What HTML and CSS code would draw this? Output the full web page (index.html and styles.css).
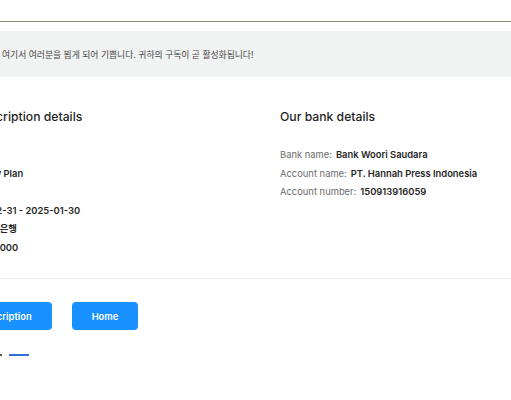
FILE: index.html
```html
<!DOCTYPE html>
<html lang="ko">
<head>
<meta charset="utf-8">
<title>Subscription</title>
<link rel="stylesheet" href="styles.css">
</head>
<body>
<header class="topbar"></header>
<div class="page">
  <div class="banner">여기서 여러분을 뵙게 되어 기쁩니다. 귀하의 구독이 곧 활성화됩니다!</div>
  <section class="cols">
    <div class="col">
      <h2 class="title">Your subscription details</h2>
      <dl class="rows">
        <dt>ID:</dt><dd>Hana</dd>
        <dt>Plan:</dt><dd>Monthly Plan</dd>
        <dt>Type:</dt><dd>Print</dd>
        <dt>Term:</dt><dd>2024-12-31 - 2025-01-30</dd>
        <dt>Bank:</dt><dd>KEB하나은행</dd>
        <dt>Fee:</dt><dd>Rp. 150.000</dd>
      </dl>
    </div>
    <div class="col">
      <h2 class="title">Our bank details</h2>
      <div class="bank">
        <p class="line"><span class="lbl">Bank name:</span><b class="val">Bank Woori Saudara</b></p>
        <p class="line"><span class="lbl">Account name:</span><b class="val">PT. Hannah Press Indonesia</b></p>
        <p class="line"><span class="lbl">Account number:</span><b class="val">150913916059</b></p>
      </div>
    </div>
  </section>
  <hr class="divider">
  <div class="actions">
    <a class="btn" href="#">Subscription</a>
    <a class="btn" href="#">Home</a>
  </div>
  <div class="tabs">
    <span class="dot"></span>
    <span class="bar"></span>
  </div>
</div>
</body>
</html>
```
FILE: styles.css
```css
html, body {
  margin: 0;
  padding: 0;
  background: #ffffff;
  overflow: hidden;
}
body {
  font-family: Inter, "Noto Sans CJK KR", sans-serif;
  color: #262626;
  width: 511px;
  height: 400px;
}
.topbar {
  height: 21px;
  border-bottom: 1px solid #8a8966;
}
.page {
  margin-left: -80px;
  width: 700px;
  padding-top: 9px;
}
.banner {
  height: 46px;
  background: #f1f2f2;
  display: flex;
  align-items: center;
  padding-left: 82px;
  font-size: 8.8px;
  color: #474747;
}
.cols {
  display: grid;
  grid-template-columns: 342px 1fr;
  padding-left: 18px;
  padding-top: 30px;
}
.title {
  margin: 0;
  font-size: 12.2px;
  line-height: 20px;
  font-weight: 500;
  color: #1f1f1f;
}
.rows {
  display: grid;
  grid-template-columns: 21px 1fr;
  column-gap: 5px;
  margin: 19px 0 0;
  font-size: 9.4px;
  line-height: 18.5px;
}
.rows dt { color: #6b6b6b; white-space: nowrap; overflow: hidden; }
.rows dd { margin: 0; font-weight: 600; color: #262626; white-space: nowrap; }
.bank {
  margin-top: 19px;
  font-size: 9.4px;
  line-height: 18.5px;
}
.line { margin: 0; }
.lbl { color: #6b6b6b; margin-right: 4px; }
.val { font-weight: 600; color: #262626; }
.divider {
  border: 0;
  border-top: 1px solid #ededed;
  margin: 21px 0 0;
}
.actions {
  display: flex;
  gap: 20px;
  padding-left: 34px;
  margin-top: 23px;
}
.btn {
  display: flex;
  align-items: center;
  height: 28px;
  padding: 0 20px;
  background: #1890ff;
  color: #ffffff;
  border-radius: 4px;
  font-size: 9.4px;
  font-weight: 600;
  text-decoration: none;
}
.tabs {
  display: flex;
  align-items: center;
  gap: 7px;
  padding-left: 80px;
  margin-top: 24px;
}
.dot {
  width: 2px;
  height: 2px;
  background: #555;
}
.bar {
  width: 20px;
  height: 2px;
  background: #2f6fd6;
}
```
